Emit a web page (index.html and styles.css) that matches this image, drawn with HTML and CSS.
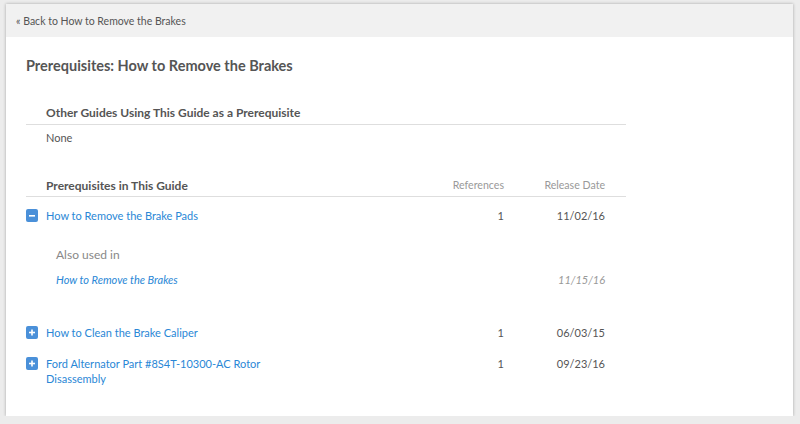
FILE: index.html
```html
<!DOCTYPE html>
<html>
<head>
<meta charset="utf-8">
<link rel="stylesheet" href="styles.css">
</head>
<body>
<div class="card">
  <div class="card-header"><a class="back" href="#">« Back to How to Remove the Brakes</a></div>
  <div class="card-body">
    <h1 class="title">Prerequisites: How to Remove the Brakes</h1>

    <div class="section">
      <div class="section-head"><span class="section-title">Other Guides Using This Guide as a Prerequisite</span></div>
      <div class="none">None</div>
    </div>

    <div class="section section-prereq">
      <div class="grid-row section-head">
        <span></span>
        <span class="section-title">Prerequisites in This Guide</span>
        <span class="col-head num">References</span>
        <span class="col-head date">Release Date</span>
      </div>

      <div class="grid-row item first">
        <span class="toggle"><svg width="12" height="13" viewBox="0 0 12 13"><rect x="0" y="0" width="12" height="13" rx="2" fill="#4a90d9"/><rect x="3" y="6" width="6" height="1.6" fill="#fff"/></svg></span>
        <a class="link" href="#">How to Remove the Brake Pads</a>
        <span class="num">1</span>
        <span class="date">11/02/16</span>
      </div>

      <div class="expanded">
        <div class="also">Also used in</div>
        <div class="sub-row">
          <a class="sub-link" href="#">How to Remove the Brakes</a>
          <span class="sub-date">11/15/16</span>
        </div>
      </div>

      <div class="grid-row item">
        <span class="toggle"><svg width="12" height="13" viewBox="0 0 12 13"><rect x="0" y="0" width="12" height="13" rx="2" fill="#4a90d9"/><rect x="3" y="5.7" width="6" height="1.6" fill="#fff"/><rect x="5.2" y="3.5" width="1.6" height="6" fill="#fff"/></svg></span>
        <a class="link" href="#">How to Clean the Brake Caliper</a>
        <span class="num">1</span>
        <span class="date">06/03/15</span>
      </div>

      <div class="grid-row item">
        <span class="toggle"><svg width="12" height="13" viewBox="0 0 12 13"><rect x="0" y="0" width="12" height="13" rx="2" fill="#4a90d9"/><rect x="3" y="5.7" width="6" height="1.6" fill="#fff"/><rect x="5.2" y="3.5" width="1.6" height="6" fill="#fff"/></svg></span>
        <a class="link" href="#">Ford Alternator Part #8S4T-10300-AC Rotor Disassembly</a>
        <span class="num">1</span>
        <span class="date">09/23/16</span>
      </div>
    </div>
  </div>
</div>
</body>
</html>
```

FILE: styles.css
```css
html, body {
  margin: 0;
  padding: 0;
  background: #ececec;
  font-family: Lato, "Liberation Sans", sans-serif;
  color: #555;
}

.card {
  margin: 4px 7px 0 6px;
  height: 412px;
  background: #fff;
  box-shadow: 0 0 3px rgba(0, 0, 0, 0.3);
  box-sizing: border-box;
}

.card-header {
  height: 33px;
  background: #f1f1f1;
  display: flex;
  align-items: center;
  padding-left: 10px;
  padding-top: 1px;
  box-sizing: border-box;
}

.back {
  font-size: 10.5px;
  color: #555;
  text-decoration: none;
}

.card-body {
  padding: 19px 20px 0 20px;
}

.title {
  margin: 0;
  font-size: 14.5px;
  line-height: 20px;
  font-weight: 700;
  color: #555;
}

.section {
  width: 600px;
}

.section-head {
  border-bottom: 1px solid #dedede;
  padding: 0 0 4px 20px;
  margin-top: 27px;
  line-height: 15px;
}

.section-title {
  font-size: 12px;
  font-weight: 700;
  color: #555;
}

.none {
  font-size: 11px;
  line-height: 15px;
  margin-top: 5px;
  padding-left: 20px;
  color: #555;
}

.section-prereq .section-head {
  margin-top: 33px;
  padding-left: 0;
  padding-bottom: 3px;
}

.grid-row {
  display: grid;
  grid-template-columns: 20px 240px 218px 122px;
  align-items: start;
}

.col-head {
  font-size: 10.6px;
  color: #999;
}

.num {
  text-align: right;
}

.date {
  text-align: right;
  padding-right: 21px;
}

.item {
  font-size: 11px;
  line-height: 15px;
  margin-top: 16px;
}

.item.first {
  margin-top: 11px;
}

.item .num, .item .date {
  color: #555;
}

.toggle {
  display: flex;
  padding-top: 1px;
}

.toggle svg {
  display: block;
}

.link {
  color: #2a87d6;
  text-decoration: none;
}

.expanded {
  padding-left: 30px;
  padding-top: 24px;
  padding-bottom: 22px;
}

.also {
  font-size: 12px;
  line-height: 16px;
  color: #888;
}

.sub-row {
  display: flex;
  justify-content: space-between;
  margin-top: 9px;
  padding-right: 21px;
  font-size: 11px;
  line-height: 15px;
  font-style: italic;
}

.sub-link {
  color: #2a87d6;
  text-decoration: none;
}

.sub-date {
  color: #999;
}
```
